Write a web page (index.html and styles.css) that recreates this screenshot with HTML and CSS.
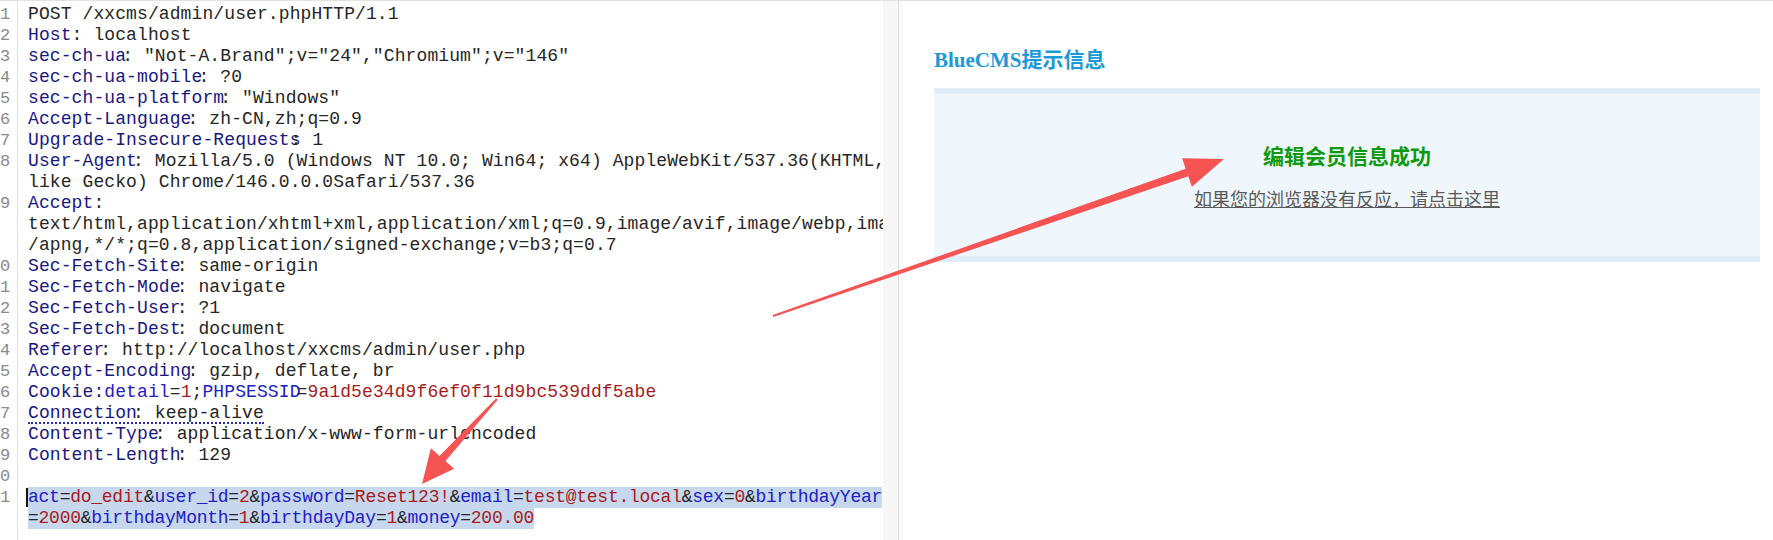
FILE: index.html
```html
<!DOCTYPE html>
<html lang="zh-CN">
<head>
<meta charset="utf-8">
<title>BlueCMS</title>
<link rel="stylesheet" href="styles.css">
</head>
<body>
<div class="page">
  <section class="editor">
    <div class="gutter">
      <div>1</div><div>2</div><div>3</div><div>4</div><div>5</div><div>6</div><div>7</div><div>8</div><div>&nbsp;</div>
      <div>9</div><div>&nbsp;</div><div>&nbsp;</div><div>0</div><div>1</div><div>2</div><div>3</div><div>4</div>
      <div>5</div><div>6</div><div>7</div><div>8</div><div>9</div><div>0</div><div>1</div><div>&nbsp;</div>
    </div>
    <div class="code">
      <div class="row">POST /xxcms/admin/user.phpHTTP/1.1</div>
      <div class="row"><span class="k">Host</span>: localhost</div>
      <div class="row"><span class="k">sec-ch-ua</span><span class="c">:</span> "Not-A.Brand";v="24","Chromium";v="146"</div>
      <div class="row"><span class="k">sec-ch-ua-mobile</span><span class="c">:</span> ?0</div>
      <div class="row"><span class="k">sec-ch-ua-platform</span><span class="c">:</span> "Windows"</div>
      <div class="row"><span class="k">Accept-Language</span><span class="c">:</span> zh-CN,zh;q=0.9</div>
      <div class="row"><span class="k">Upgrade-Insecure-Requests</span><span class="c2">:</span> 1</div>
      <div class="row"><span class="k">User-Agent</span><span class="c">:</span> Mozilla/5.0 (Windows NT 10.0; Win64; x64) AppleWebKit/537.36(KHTML,</div>
      <div class="row">like Gecko) Chrome/146.0.0.0Safari/537.36</div>
      <div class="row"><span class="k">Accept</span>:</div>
      <div class="row">text/html,application/xhtml+xml,application/xml;q=0.9,image/avif,image/webp,image</div>
      <div class="row">/apng,*/*;q=0.8,application/signed-exchange;v=b3;q=0.7</div>
      <div class="row"><span class="k">Sec-Fetch-Site</span><span class="c">:</span> same-origin</div>
      <div class="row"><span class="k">Sec-Fetch-Mode</span><span class="c">:</span> navigate</div>
      <div class="row"><span class="k">Sec-Fetch-User</span><span class="c">:</span> ?1</div>
      <div class="row"><span class="k">Sec-Fetch-Dest</span><span class="c">:</span> document</div>
      <div class="row"><span class="k">Referer</span><span class="c">:</span> http://localhost/xxcms/admin/user.php</div>
      <div class="row"><span class="k">Accept-Encoding</span><span class="c">:</span> gzip, deflate, br</div>
      <div class="row"><span class="k">Cookie:</span><span class="p">detail</span>=<span class="r">1</span>;<span class="p">PHPSESSID</span><span class="c">=</span><span class="r">9a1d5e34d9f6ef0f11d9bc539ddf5abe</span></div>
      <div class="row"><span class="dotted"><span class="k">Connection</span><span class="c">:</span> keep-alive</span></div>
      <div class="row"><span class="k">Content-Type</span><span class="c">:</span> application/x-www-form-urlencoded</div>
      <div class="row"><span class="k">Content-Length</span><span class="c">:</span> 129</div>
      <div class="row">&nbsp;</div>
      <div class="row body"><span class="caret"></span><span class="sel"><span class="p">act</span>=<span class="r">do_edit</span>&amp;<span class="p">user_id</span>=<span class="r">2</span>&amp;<span class="p">password</span>=<span class="r">Reset123!</span>&amp;<span class="p">email</span>=<span class="r">test@test.local</span>&amp;<span class="p">sex</span>=<span class="r">0</span>&amp;<span class="p">birthdayYear</span></span></div>
      <div class="row body"><span class="sel">=<span class="r">2000</span>&amp;<span class="p">birthdayMonth</span>=<span class="r">1</span>&amp;<span class="p">birthdayDay</span>=<span class="r">1</span>&amp;<span class="p">money</span>=<span class="r">200.00</span></span></div>
    </div>
    <div class="scroll"></div>
  </section>
  <section class="result">
    <h2 class="title">BlueCMS提示信息</h2>
    <div class="msgbox">
      <p class="ok">编辑会员信息成功</p>
      <a class="back" href="#">如果您的浏览器没有反应，请点击这里</a>
    </div>
  </section>
  <svg class="marks" width="1773" height="540" viewBox="0 0 1773 540">
    <polygon fill="#f65353" points="773.3,315.9 1188.3,175.3 1191.9,185.7 1224,158 1182.1,157.3 1185.7,167.7 772.7,314.1"/>
    <polygon fill="#f65353" points="497.75,398.66 445.5,460.1 454.1,467.7 422,483 430.9,447.3 439.5,454.9 496.25,397.34"/>
  </svg>
</div>
</body>
</html>
```

FILE: styles.css
```css
html, body {
  margin: 0;
  padding: 0;
  background: #ffffff;
}

.page {
  position: relative;
  width: 1773px;
  height: 540px;
  display: flex;
  border-top: 1px solid #e2e2e2;
  box-sizing: border-box;
  overflow: hidden;
}

.editor {
  display: flex;
  width: 899px;
  flex: none;
  border-right: 1px solid #dcdcdc;
  box-sizing: border-box;
}

.gutter {
  width: 18px;
  flex: none;
  box-sizing: border-box;
  border-right: 1px solid #e0e0e0;
  padding: 3px 7px 0 0;
  text-align: right;
  font-family: "Liberation Mono", monospace;
  font-size: 17px;
  line-height: 21px;
  color: #8a8a8a;
}

.code {
  width: 865px;
  flex: none;
  padding: 3px 0 0 10px;
  box-sizing: border-box;
  overflow: hidden;
  font-family: "Liberation Mono", "Courier New", monospace;
  font-size: 18px;
  letter-spacing: 0.1px;
  line-height: 21px;
  color: #262626;
}

.row {
  height: 21px;
  white-space: pre;
}

.k { color: #18187f; }
.p { color: #2020c4; }
.r { color: #a81b1b; }
.c { margin-left: -4px; }
.c2 { margin-left: -10px; }

.dotted {
  display: inline-block;
  height: 19px;
  border-bottom: 2px dotted #2a2aa8;
}

.body {
  letter-spacing: -0.26px;
}

.sel {
  display: inline-block;
  height: 21px;
  background: #c7d7ee;
}

.caret {
  display: inline-block;
  width: 0;
  height: 19px;
  margin-left: -2px;
  vertical-align: top;
  margin-top: 1px;
  border-left: 2px solid #111111;
}

.scroll {
  flex: 1;
  background: #f7f7f7;
}

.result {
  flex: 1;
  padding: 47px 13px 0 31px;
  border-left: 4px solid #fafafa;
}

.title {
  margin: 0 0 16px;
  font-family: "Liberation Serif", "Noto Sans CJK SC", serif;
  font-size: 21px;
  line-height: 24px;
  font-weight: bold;
  color: #1a9ad6;
}

.msgbox {
  border-top: 6px solid #deedf8;
  border-bottom: 6px solid #deedf8;
  background: #f0f7fc;
  height: 113px;
  padding-top: 49px;
  box-sizing: content-box;
  text-align: center;
  font-family: "Noto Sans CJK SC", sans-serif;
}

.ok {
  margin: 0 0 19px;
  font-size: 21px;
  line-height: 24px;
  font-weight: bold;
  color: #0e9a0e;
}

.back {
  font-size: 18px;
  line-height: 24px;
  color: #5a5a5a;
  text-decoration: underline;
}

.marks {
  position: absolute;
  left: 0;
  top: 0;
  pointer-events: none;
}
```
